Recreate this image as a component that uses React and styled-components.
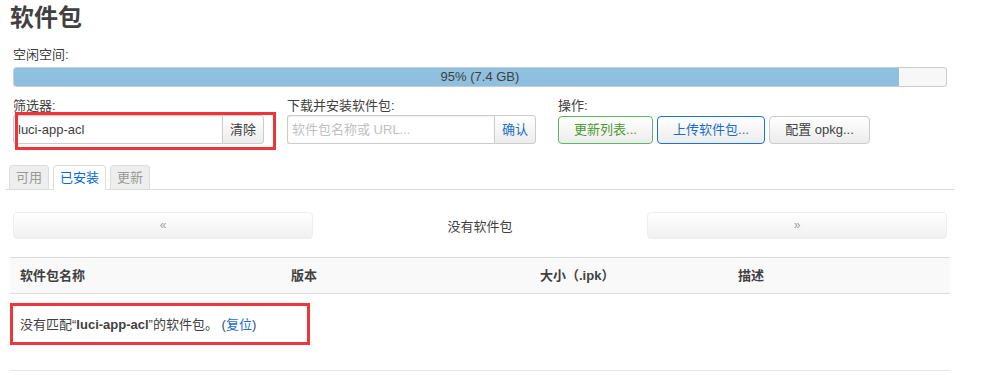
import React from "react";
import styled, { createGlobalStyle } from "styled-components";

const Global = createGlobalStyle`
  html, body { margin: 0; padding: 0; background: #fff; }
  body {
    font-family: "Liberation Sans", "Noto Sans CJK SC", sans-serif;
    font-size: 13px;
    color: #404040;
  }
  * { box-sizing: border-box; }
`;

const Page = styled.div`
  width: 987px;
  height: 375px;
  overflow: hidden;
  display: flex;
  flex-direction: column;
`;

const Title = styled.h2`
  margin: 0;
  padding-left: 10px;
  height: 36px;
  line-height: 36px;
  font-size: 24px;
  font-weight: bold;
  color: #404040;
`;

const Section = styled.div`
  margin-left: 13px;
  width: 934px;
  margin-top: ${(p) => p.$mt || 0}px;
`;

const Label = styled.div`
  height: 18px;
  line-height: 18px;
  font-size: 13px;
  color: #404040;
`;

const Bar = styled.div`
  position: relative;
  margin-top: 3px;
  height: 20px;
  border: 1px solid #ccc;
  border-radius: 3px;
  background: #f7f7f7;
  overflow: hidden;
`;

const BarFill = styled.div`
  height: 100%;
  background: #8fc0df;
`;

const BarText = styled.div`
  position: absolute;
  inset: 0;
  text-align: center;
  line-height: 18px;
  font-size: 13px;
  color: #404040;
`;

const ControlRow = styled.div`
  display: flex;
  margin-top: 10px;
`;

const Field = styled.div`
  position: relative;
  width: ${(p) => p.$w}px;
  margin-right: ${(p) => p.$mr || 0}px;
  display: flex;
  flex-direction: column;
`;

const InputGroup = styled.div`
  display: flex;
  height: 29px;
`;

const TextInput = styled.div`
  flex: 1;
  border: 1px solid #ccc;
  border-right: none;
  border-radius: 3px 0 0 3px;
  padding-left: 4px;
  line-height: 27px;
  font-size: 13px;
  color: ${(p) => (p.$placeholder ? "#c0c0c0" : "#404040")};
  background: #fff;
  box-shadow: inset 0 1px 2px rgba(0, 0, 0, 0.06);
`;

const AddonButton = styled.div`
  width: ${(p) => p.$w}px;
  border: 1px solid #ccc;
  border-radius: 0 3px 3px 0;
  background: linear-gradient(#ffffff, #ececec);
  text-align: center;
  line-height: 27px;
  font-size: 13px;
  color: ${(p) => p.$color || "#404040"};
`;

const ButtonRow = styled.div`
  display: flex;
  gap: 4px;
  margin-top: 1px;
`;

const Button = styled.div`
  height: 28px;
  width: ${(p) => p.$w}px;
  border: 1px solid ${(p) => p.$border || "#ccc"};
  border-radius: 4px;
  background: linear-gradient(#ffffff, #ececec);
  text-align: center;
  line-height: 26px;
  font-size: 13px;
  color: ${(p) => p.$color || "#404040"};
`;

const Highlight = styled.div`
  position: absolute;
  left: ${(p) => p.$l}px;
  top: ${(p) => p.$t}px;
  width: ${(p) => p.$w}px;
  height: ${(p) => p.$h}px;
  border: 3px solid #f0353a;
  pointer-events: none;
`;

const Tabs = styled.div`
  display: flex;
  align-items: flex-end;
  gap: 4px;
  margin: 21px 0 0 5px;
  width: 950px;
  padding-left: 4px;
  border-bottom: 1px solid #ddd;
  height: 25px;
`;

const Tab = styled.div`
  height: ${(p) => (p.$active ? 25 : 24)}px;
  padding: 0 6px;
  border: 1px solid #ddd;
  border-bottom: ${(p) => (p.$active ? "1px solid #fff" : "none")};
  margin-bottom: ${(p) => (p.$active ? -1 : 0)}px;
  border-radius: 4px 4px 0 0;
  background: ${(p) => (p.$active ? "#fff" : "#eee")};
  color: ${(p) => (p.$active ? "#0069d6" : "#999")};
  line-height: 23px;
  font-size: 13px;
`;

const Pager = styled.div`
  display: grid;
  grid-template-columns: 300px 1fr 300px;
  align-items: center;
  margin: 22px 0 0 13px;
  width: 934px;
  height: 27px;
`;

const PagerButton = styled.div`
  height: 27px;
  border: 1px solid #eee;
  border-radius: 4px;
  background: linear-gradient(#ffffff, #f0f0f0);
  text-align: center;
  line-height: 25px;
  font-size: 12px;
  color: #a0a0a0;
`;

const PagerText = styled.div`
  text-align: center;
  font-size: 13px;
  color: #404040;
`;

const Table = styled.div`
  margin: 18px 0 0 10px;
  width: 940px;
`;

const HeadRow = styled.div`
  display: grid;
  grid-template-columns: 271px 249px 198px 1fr;
  height: 37px;
  background: #f9f9f9;
  border-top: 1px solid #ddd;
  border-bottom: 1px solid #ddd;
`;

const HeadCell = styled.div`
  padding-left: 10px;
  line-height: 35px;
  font-weight: bold;
  font-size: 13px;
  color: #404040;
`;

const BodyRow = styled.div`
  position: relative;
  height: 77px;
  border-bottom: 1px solid #e6e6e6;
  padding: 22px 0 0 10px;
  line-height: 18px;
  font-size: 13px;
  color: #404040;
`;

const Strong = styled.b`
  font-weight: bold;
`;

const Quote = styled.span`
  font-family: "Liberation Sans", sans-serif;
  font-weight: normal;
`;

const Paren = styled.span`
  color: #2d4f7c;
`;

const Link = styled.span`
  color: #1a6dcc;
`;

export default function App() {
  return (
    <Page>
      <Global />
      <Title>软件包</Title>
      <Section $mt={10}>
        <Label>空闲空间:</Label>
        <Bar>
          <BarFill style={{ width: "95%" }} />
          <BarText>95% (7.4 GB)</BarText>
        </Bar>
        <ControlRow>
          <Field $w={251} $mr={23}>
            <Label>筛选器:</Label>
            <InputGroup>
              <TextInput>luci-app-acl</TextInput>
              <AddonButton $w={42}>清除</AddonButton>
            </InputGroup>
            <Highlight $l={2} $t={15} $w={261} $h={38} />
          </Field>
          <Field $w={249} $mr={22}>
            <Label>下载并安装软件包:</Label>
            <InputGroup>
              <TextInput $placeholder>软件包名称或 URL...</TextInput>
              <AddonButton $w={42} $color="#1a6dcc">确认</AddonButton>
            </InputGroup>
          </Field>
          <Field $w={320}>
            <Label>操作:</Label>
            <ButtonRow>
              <Button $w={95} $border="#5cb85c" $color="#4d9a2f">更新列表...</Button>
              <Button $w={108} $border="#1a73d8" $color="#1a6dcc">上传软件包...</Button>
              <Button $w={101}>配置 opkg...</Button>
            </ButtonRow>
          </Field>
        </ControlRow>
      </Section>
      <Tabs>
        <Tab>可用</Tab>
        <Tab $active>已安装</Tab>
        <Tab>更新</Tab>
      </Tabs>
      <Pager>
        <PagerButton>«</PagerButton>
        <PagerText>没有软件包</PagerText>
        <PagerButton>»</PagerButton>
      </Pager>
      <Table>
        <HeadRow>
          <HeadCell>软件包名称</HeadCell>
          <HeadCell>版本</HeadCell>
          <HeadCell>大小（.ipk）</HeadCell>
          <HeadCell>描述</HeadCell>
        </HeadRow>
        <BodyRow>
          没有匹配<Quote>“</Quote><Strong>luci-app-acl</Strong><Quote>”</Quote>的软件包。 <Paren>(</Paren>
          <Link>复位</Link>
          <Paren>)</Paren>
          <Highlight $l={0} $t={9} $w={300} $h={42} />
        </BodyRow>
      </Table>
    </Page>
  );
}
